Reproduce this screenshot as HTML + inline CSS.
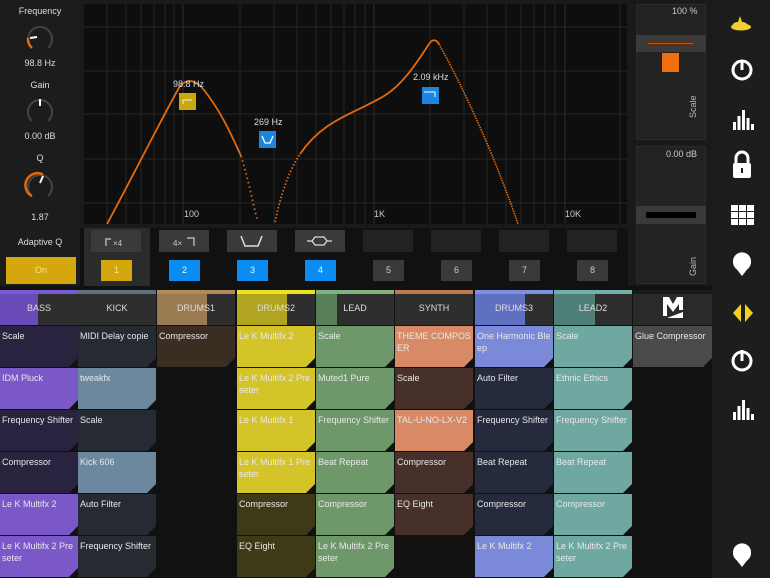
<!DOCTYPE html>
<html><head><meta charset="utf-8">
<style>
*{margin:0;padding:0;box-sizing:border-box}
body{width:770px;height:578px;background:#111;font-family:"Liberation Sans",sans-serif;position:relative;overflow:hidden;color:#ddd}
.a{position:absolute}
.lbl{font-size:9px;color:#ddd;text-align:center;width:80px;left:0}
.c{position:absolute;width:78px;height:41px;font-size:9px;color:#e8e8e8;padding:4px 2px;line-height:12px;overflow:hidden;word-break:break-all}
.c::after{content:"";position:absolute;right:0;bottom:0;border-left:9px solid transparent;border-bottom:9px solid #111}
.h{position:absolute;top:290px;height:35px;width:78px;background:#2e2e2e;font-size:9px;text-align:center;line-height:36px;color:#ddd}
.h i{position:absolute;left:0;top:0;height:4px;width:100%}
.h b{position:absolute;left:0;top:4px;height:31px}
.h span{position:relative}
.bt{position:absolute;width:50px;height:22px;background:#3a3a3a}
.nb{position:absolute;width:31px;height:21px;background:#3a3a3a;font-size:9px;text-align:center;line-height:21px;color:#ccc}
</style></head><body>
<div class="a" style="left:0;top:0;width:80px;height:288px;background:#1c1c1c"></div>
<div class="a lbl" style="top:6px">Frequency</div>
<svg class="a" style="left:24px;top:22px" width="32" height="32"><path d="M8 26 A12 12 0 1 1 24 26" fill="none" stroke="#444" stroke-width="2"/><path d="M8 26 A12 12 0 0 1 4 16" fill="none" stroke="#e06a10" stroke-width="2.5"/><line x1="6" y1="16" x2="13" y2="15" stroke="#fff" stroke-width="2"/></svg>
<div class="a lbl" style="top:58px">98.8 Hz</div>
<div class="a lbl" style="top:80px">Gain</div>
<svg class="a" style="left:24px;top:95px" width="32" height="32"><path d="M8 26 A12 12 0 1 1 24 26" fill="none" stroke="#444" stroke-width="2"/><line x1="16" y1="4" x2="16" y2="11" stroke="#fff" stroke-width="2"/></svg>
<div class="a lbl" style="top:131px">0.00 dB</div>
<div class="a lbl" style="top:153px">Q</div>
<svg class="a" style="left:24px;top:170px" width="32" height="32"><path d="M8 26 A12 12 0 1 1 24 26" fill="none" stroke="#444" stroke-width="2"/><path d="M8 26 A12 12 0 0 1 19 4.5" fill="none" stroke="#e06a10" stroke-width="2.5"/><line x1="19" y1="6" x2="16" y2="13" stroke="#fff" stroke-width="2"/></svg>
<div class="a lbl" style="top:212px">1.87</div>
<div class="a lbl" style="top:237px">Adaptive Q</div>
<div class="a" style="left:6px;top:257px;width:70px;height:27px;background:#d4a80c;font-size:9px;text-align:center;line-height:27px;color:#f5e2a0">On</div>
<div class="a" style="left:80px;top:0;width:552px;height:228px;background:#1a1a1a"></div>
<svg class="a" style="left:84px;top:4px" width="543" height="220">
<rect width="543" height="220" fill="#0e0e0e"/>
<g stroke="#262626" stroke-width="1">
<line x1="0" y1="23" x2="543" y2="23"/><line x1="0" y1="67" x2="543" y2="67"/><line x1="0" y1="110" x2="543" y2="110"/><line x1="0" y1="155" x2="543" y2="155"/><line x1="0" y1="199" x2="543" y2="199"/>
<path d="M23 0V220M42 0V220M57 0V220M70 0V220M81 0V220M90 0V220M156 0V220M213 0V220M232 0V220M247 0V220M260 0V220M271 0V220M281 0V220M346 0V220M403 0V220M422 0V220M437 0V220M450 0V220M461 0V220M471 0V220M536 0V220M190 0V220M380 0V220"/>
</g>
<g stroke="#2e2e2e"><line x1="99" y1="0" x2="99" y2="220"/><line x1="290" y1="0" x2="290" y2="220"/><line x1="481" y1="0" x2="481" y2="220"/></g>
<text x="100" y="213" font-size="9" fill="#ccc" font-family="Liberation Sans">100</text>
<text x="290" y="213" font-size="9" fill="#ccc" font-family="Liberation Sans">1K</text>
<text x="481" y="213" font-size="9" fill="#ccc" font-family="Liberation Sans">10K</text>
<path d="M23 220 C50 170 80 110 96 82 C104 74 112 76 120 86 C135 105 145 125 157 152" fill="none" stroke="#e06a10" stroke-width="1.8"/>
<path d="M157 152 C163 170 168 195 173 215" fill="none" stroke="#e06a10" stroke-width="1.8" stroke-dasharray="1.5 3"/>
<path d="M191 218 C196 195 203 170 216 150" fill="none" stroke="#e06a10" stroke-width="1.8" stroke-dasharray="1.5 2"/>
<path d="M216 150 C240 115 270 110 300 92 C320 80 335 55 345 40 C348 35 352 35 355 40" fill="none" stroke="#e06a10" stroke-width="1.8"/>
<path d="M355 40 C380 85 410 150 434 220" fill="none" stroke="#e06a10" stroke-width="1.6" stroke-dasharray="1.5 1"/>
<text x="89" y="83" font-size="9" fill="#ddd" font-family="Liberation Sans">98.8 Hz</text>
<rect x="95" y="89" width="17" height="17" fill="#c9a80e"/>
<path d="M99 100 V96 H108" fill="none" stroke="#eee" stroke-width="1"/>
<text x="170" y="121" font-size="9" fill="#ddd" font-family="Liberation Sans">269 Hz</text>
<rect x="175" y="127" width="17" height="17" fill="#1a86e0"/>
<path d="M178 132 L181 139 H186 L189 132" fill="none" stroke="#fff" stroke-width="1.3"/>
<text x="329" y="76" font-size="9" fill="#ddd" font-family="Liberation Sans">2.09 kHz</text>
<rect x="338" y="83" width="17" height="17" fill="#1a86e0"/>
<path d="M340 88 H351 V93" fill="none" stroke="#fff" stroke-width="1"/>
</svg>
<div class="a" style="left:84px;top:228px;width:66px;height:58px;background:#2b2b2b"></div>
<div class="bt" style="left:91px;top:230px"></div>
<svg class="a" style="left:91px;top:230px" width="50" height="22"><path d="M15 16V9H20" fill="none" stroke="#ccc" stroke-width="1.2"/><text x="22" y="16" font-size="8" fill="#ccc" font-family="Liberation Sans">×4</text></svg>
<div class="bt" style="left:159px;top:230px"></div>
<svg class="a" style="left:159px;top:230px" width="50" height="22"><text x="14" y="16" font-size="8" fill="#ccc" font-family="Liberation Sans">4×</text><path d="M28 8H35V16" fill="none" stroke="#ccc" stroke-width="1.2"/></svg>
<div class="bt" style="left:227px;top:230px"></div>
<svg class="a" style="left:227px;top:230px" width="50" height="22"><path d="M14 6L18 16H31L35 6" fill="none" stroke="#ddd" stroke-width="1.5"/></svg>
<div class="bt" style="left:295px;top:230px"></div>
<svg class="a" style="left:295px;top:230px" width="50" height="22"><path d="M12 11H17L20 7H29L32 11H37M17 11L20 15H29L32 11" fill="none" stroke="#ddd" stroke-width="1.3"/></svg>
<div class="bt" style="left:363px;top:230px;background:#222"></div>
<div class="bt" style="left:431px;top:230px;background:#222"></div>
<div class="bt" style="left:499px;top:230px;background:#222"></div>
<div class="bt" style="left:567px;top:230px;background:#222"></div>
<div class="nb" style="left:101px;top:260px;background:#d4a80c;color:#f5e2a0">1</div>
<div class="nb" style="left:169px;top:260px;background:#0a8cf0;color:#dff">2</div>
<div class="nb" style="left:237px;top:260px;background:#0a8cf0;color:#dff">3</div>
<div class="nb" style="left:305px;top:260px;background:#0a8cf0;color:#dff">4</div>
<div class="nb" style="left:373px;top:260px">5</div>
<div class="nb" style="left:441px;top:260px">6</div>
<div class="nb" style="left:509px;top:260px">7</div>
<div class="nb" style="left:577px;top:260px">8</div>
<div class="a" style="left:628px;top:0;width:84px;height:288px;background:#1a1a1a"></div>
<div class="a" style="left:636px;top:4px;width:70px;height:136px;background:#222;border:1px solid #2c2c2c"></div>
<div class="a" style="left:672px;top:6px;font-size:9px;color:#ccc">100 %</div>
<div class="a" style="left:636px;top:35px;width:70px;height:17px;background:#3a3a3a"></div>
<div class="a" style="left:647px;top:42px;width:47px;height:3px;background:#c05010;border:1px solid #702a00"></div>
<div class="a" style="left:662px;top:53px;width:17px;height:19px;background:#f07010"></div>
<div class="a" style="left:688px;top:118px;font-size:9px;color:#bbb;transform:rotate(-90deg);transform-origin:left top">Scale</div>
<div class="a" style="left:636px;top:146px;width:70px;height:138px;background:#222;border:1px solid #2c2c2c"></div>
<div class="a" style="left:666px;top:149px;font-size:9px;color:#ccc">0.00 dB</div>
<div class="a" style="left:636px;top:206px;width:70px;height:18px;background:#3a3a3a"></div>
<div class="a" style="left:646px;top:212px;width:50px;height:6px;background:#000"></div>
<div class="a" style="left:688px;top:276px;font-size:9px;color:#bbb;transform:rotate(-90deg);transform-origin:left top">Gain</div>
<div class="a" style="left:712px;top:0;width:58px;height:578px;background:#1d1d1d"></div>
<svg class="a" style="left:712px;top:0" width="58" height="578">
<path d="M20 28Q20 22 26 22L28 16L30 22Q36 22 36 28Z" fill="#f0d030"/>
<ellipse cx="29" cy="27" rx="10" ry="3.5" fill="#f0d030"/>
<circle cx="30" cy="70" r="9" fill="none" stroke="#fff" stroke-width="3"/><line x1="30" y1="60" x2="30" y2="70" stroke="#fff" stroke-width="3"/>
<g fill="#fff"><rect x="21" y="122" width="3" height="8"/><rect x="25.5" y="116" width="3" height="14"/><rect x="30" y="110" width="3" height="20"/><rect x="34.5" y="118" width="3" height="12"/><rect x="39" y="124" width="3" height="6"/></g>
<path d="M24 163V158A6 6 0 0 1 36 158V163" fill="none" stroke="#fff" stroke-width="3"/><rect x="21" y="163" width="18" height="15" rx="2" fill="#fff"/><rect x="29" y="168" width="2" height="5" fill="#1d1d1d"/>
<g fill="#fff"><rect x="19" y="205" width="7" height="6"/><rect x="27" y="205" width="7" height="6"/><rect x="35" y="205" width="7" height="6"/><rect x="19" y="212" width="7" height="6"/><rect x="27" y="212" width="7" height="6"/><rect x="35" y="212" width="7" height="6"/><rect x="19" y="219" width="7" height="6"/><rect x="27" y="219" width="7" height="6"/><rect x="35" y="219" width="7" height="6"/></g>
<path d="M30 276L23 267A9 9 0 1 1 37 267Z" fill="#fff"/><circle cx="30" cy="262" r="9" fill="#fff"/>
<path d="M29 304L21 313L29 322Z M33 304L41 313L33 322Z" fill="#f0d020"/>
<circle cx="30" cy="361" r="9" fill="none" stroke="#fff" stroke-width="3"/><line x1="30" y1="350" x2="30" y2="361" stroke="#fff" stroke-width="3"/>
<g fill="#fff"><rect x="21" y="412" width="3" height="8"/><rect x="25.5" y="406" width="3" height="14"/><rect x="30" y="400" width="3" height="20"/><rect x="34.5" y="408" width="3" height="12"/><rect x="39" y="414" width="3" height="6"/></g>
<path d="M30 567L23 558A9 9 0 1 1 37 558Z" fill="#fff"/><circle cx="30" cy="553" r="9" fill="#fff"/>
</svg>
<div class="a" style="left:0;top:286px;width:712px;height:4px;background:#111"></div>
<div class="h" style="left:0"><i style="background:#7a5ad0"></i><b style="width:38px;background:#6a4cb8"></b><span>BASS</span></div>
<div class="h" style="left:78px"><i style="background:#5c7080"></i><span>KICK</span></div>
<div class="h" style="left:157px"><i style="background:#b08a5a"></i><b style="width:50px;background:#9a7a50"></b><span>DRUMS1</span></div>
<div class="h" style="left:237px"><i style="background:#f0e020"></i><b style="width:50px;background:#b0a420"></b><span>DRUMS2</span></div>
<div class="h" style="left:316px"><i style="background:#80b080"></i><b style="width:21px;background:#5a805a"></b><span>LEAD</span></div>
<div class="h" style="left:395px"><i style="background:#c07850"></i><span>SYNTH</span></div>
<div class="h" style="left:475px"><i style="background:#8090e0"></i><b style="width:50px;background:#6070c0"></b><span>DRUMS3</span></div>
<div class="h" style="left:554px"><i style="background:#70b0a8"></i><b style="width:41px;background:#4f8078"></b><span>LEAD2</span></div>
<div class="h" style="left:633px;width:79px;background:#2a2a2a;border-top:4px solid #1a1a1a"></div>
<svg class="a" style="left:660px;top:294px" width="26" height="28"><path d="M3 3H9L13 10L17 3H23V16L19 16V10L13 18L7 10V22H3Z" fill="#fff"/><path d="M7 24L23 18V24Z" fill="#fff"/></svg>
<div class="c" style="left:0;top:326px;background:#2a2340">Scale</div>
<div class="c" style="left:0;top:368px;background:#7a58c8">IDM Pluck</div>
<div class="c" style="left:0;top:410px;background:#2a2340">Frequency Shifter</div>
<div class="c" style="left:0;top:452px;background:#2a2340">Compressor</div>
<div class="c" style="left:0;top:494px;background:#7a58c8">Le K Multifx 2</div>
<div class="c" style="left:0;top:536px;background:#7a58c8">Le K Multifx 2 Preseter</div>
<div class="c" style="left:78px;top:326px;background:#262b33">MIDI Delay copie</div>
<div class="c" style="left:78px;top:368px;background:#6c889e">tweakfx</div>
<div class="c" style="left:78px;top:410px;background:#262b33">Scale</div>
<div class="c" style="left:78px;top:452px;background:#6c889e">Kick 606</div>
<div class="c" style="left:78px;top:494px;background:#262b33">Auto Filter</div>
<div class="c" style="left:78px;top:536px;background:#262b33">Frequency Shifter</div>
<div class="c" style="left:157px;top:326px;background:#3a2e22">Compressor</div>
<div class="c" style="left:237px;top:326px;background:#d4c42a">Le K Multifx 2</div>
<div class="c" style="left:237px;top:368px;background:#d4c42a">Le K Multifx 2 Preseter</div>
<div class="c" style="left:237px;top:410px;background:#d4c42a">Le K  Multifx 1</div>
<div class="c" style="left:237px;top:452px;background:#d4c42a">Le K Multifx 1 Preseter</div>
<div class="c" style="left:237px;top:494px;background:#3e3a18">Compressor</div>
<div class="c" style="left:237px;top:536px;background:#3e3a18">EQ Eight</div>
<div class="c" style="left:316px;top:326px;background:#6e986a">Scale</div>
<div class="c" style="left:316px;top:368px;background:#6e986a">Muted1 Pure</div>
<div class="c" style="left:316px;top:410px;background:#6e986a">Frequency Shifter</div>
<div class="c" style="left:316px;top:452px;background:#6e986a">Beat Repeat</div>
<div class="c" style="left:316px;top:494px;background:#6e986a">Compressor</div>
<div class="c" style="left:316px;top:536px;background:#6e986a">Le K Multifx 2 Preseter</div>
<div class="c" style="left:395px;top:326px;background:#d88a66">THEME COMPOSER</div>
<div class="c" style="left:395px;top:368px;background:#48302a">Scale</div>
<div class="c" style="left:395px;top:410px;background:#d88a66">TAL-U-NO-LX-V2</div>
<div class="c" style="left:395px;top:452px;background:#48302a">Compressor</div>
<div class="c" style="left:395px;top:494px;background:#48302a">EQ Eight</div>
<div class="c" style="left:475px;top:326px;background:#7a8ad8">One Harmonic Bleep</div>
<div class="c" style="left:475px;top:368px;background:#252a3c">Auto Filter</div>
<div class="c" style="left:475px;top:410px;background:#252a3c">Frequency Shifter</div>
<div class="c" style="left:475px;top:452px;background:#252a3c">Beat Repeat</div>
<div class="c" style="left:475px;top:494px;background:#252a3c">Compressor</div>
<div class="c" style="left:475px;top:536px;background:#7a8ad8">Le K Multifx 2</div>
<div class="c" style="left:554px;top:326px;background:#6ea8a0">Scale</div>
<div class="c" style="left:554px;top:368px;background:#6ea8a0">Ethnic Ethics</div>
<div class="c" style="left:554px;top:410px;background:#6ea8a0">Frequency Shifter</div>
<div class="c" style="left:554px;top:452px;background:#6ea8a0">Beat Repeat</div>
<div class="c" style="left:554px;top:494px;background:#6ea8a0">Compressor</div>
<div class="c" style="left:554px;top:536px;background:#6ea8a0">Le K Multifx 2 Preseter</div>
<div class="c" style="left:633px;top:326px;width:79px;background:#4a4a4a">Glue Compressor</div>
</body></html>
